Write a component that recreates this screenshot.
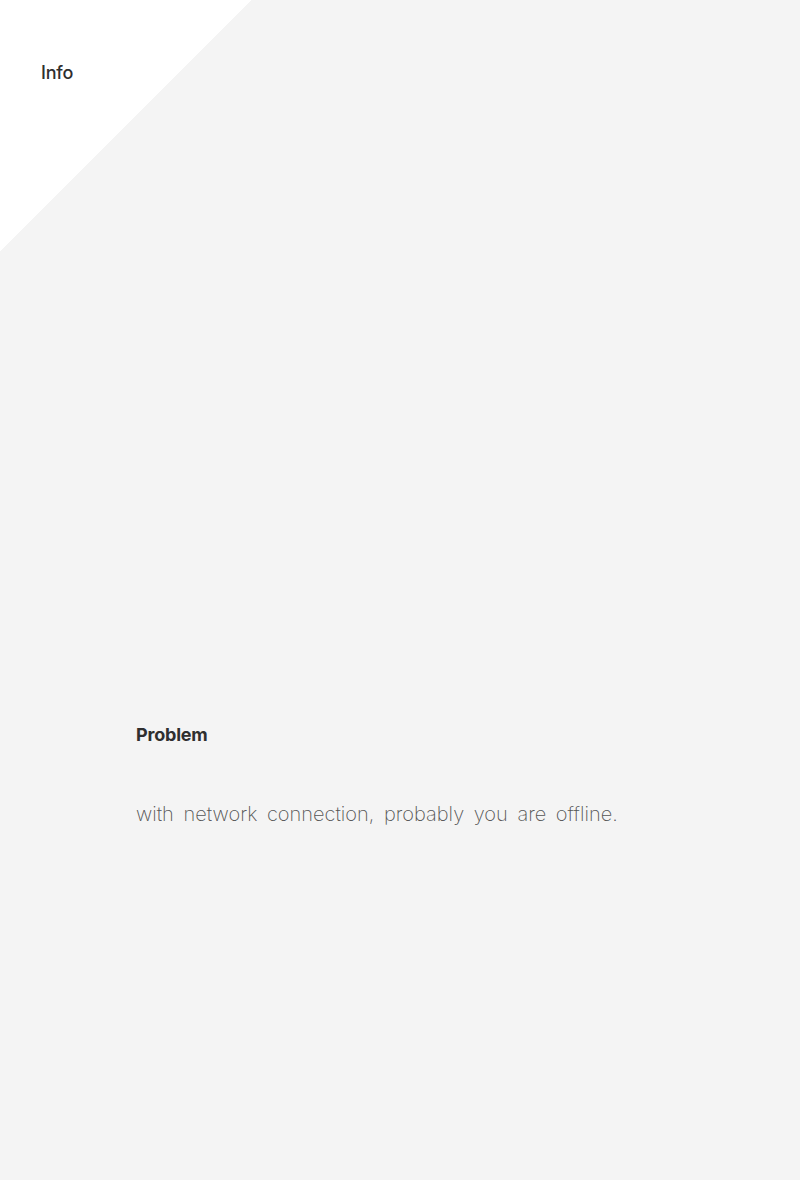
export default function App() {
  return (
    <div
      className="min-h-[1180px] w-full bg-[#f4f4f4] bg-[linear-gradient(135deg,#ffffff_178px,#f4f4f4_178px)] text-[#2f2f2f]"
      style={{ fontFamily: 'Inter, "Noto Sans", sans-serif' }}
    >
      <header className="pl-[41px] pt-[61px]">
        <span className="text-[18px] font-medium leading-[24px] tracking-[-0.2px]">Info</span>
      </header>

      <main className="pl-[136px] pt-[638px]">
        <h1 className="text-[18px] font-bold leading-[24px] tracking-[-0.2px]">Problem</h1>
        <p className="mt-[52px] text-[20px] font-extralight leading-[30px] text-[#555] [word-spacing:4px]">
          with network connection, probably you are offline.
        </p>
      </main>
    </div>
  );
}
